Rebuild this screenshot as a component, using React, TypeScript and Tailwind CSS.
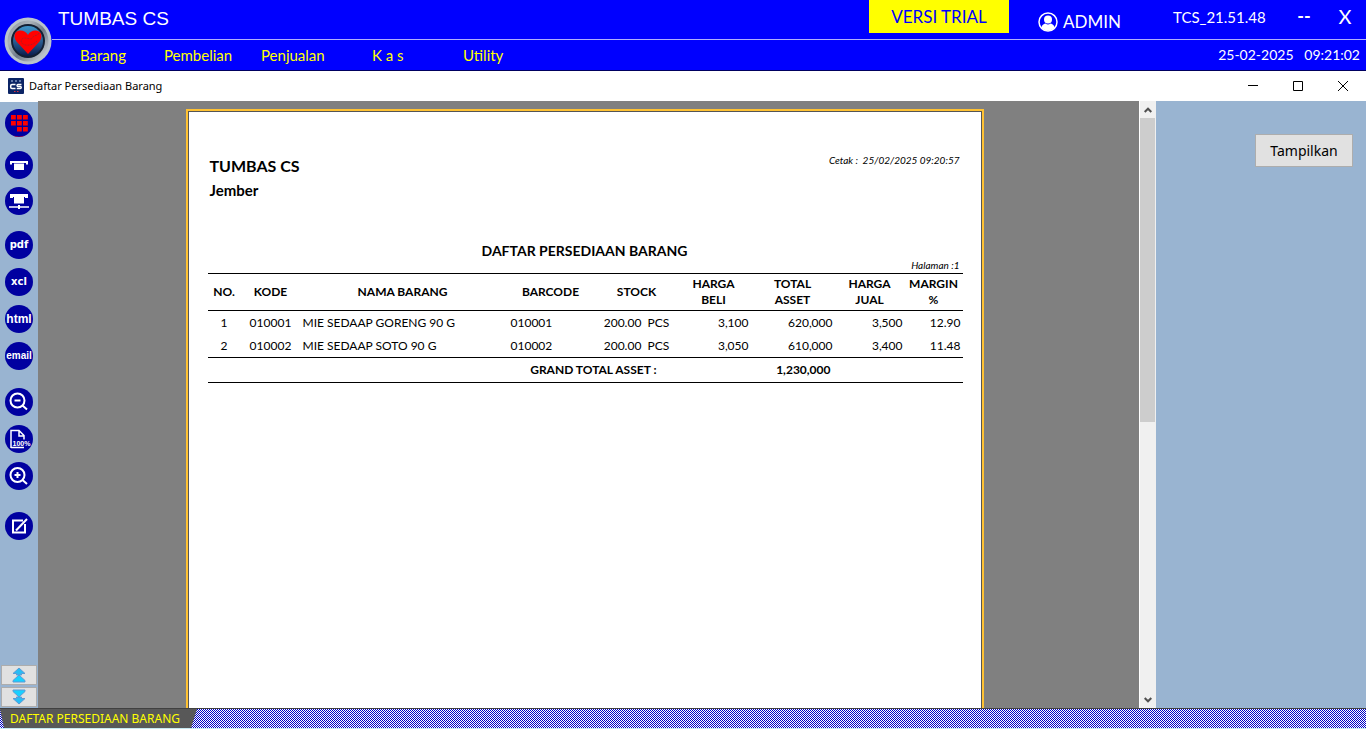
import type { ReactNode } from 'react';

interface StockRow { no: number; kode: string; nama: string; barcode: string; stock: string; beli: string; total: string; jual: string; margin: string; }

const rows: StockRow[] = [
  { no: 1, kode: '010001', nama: 'MIE SEDAAP GORENG 90 G', barcode: '010001', stock: '200.00  PCS', beli: '3,100', total: '620,000', jual: '3,500', margin: '12.90' },
  { no: 2, kode: '010002', nama: 'MIE SEDAAP SOTO 90 G', barcode: '010002', stock: '200.00  PCS', beli: '3,050', total: '610,000', jual: '3,400', margin: '11.48' },
];

const menus = [
  { label: 'Barang', width: 'w-[84px]' },
  { label: 'Pembelian', width: 'w-[97px]' },
  { label: 'Penjualan', width: 'w-[111px]' },
  { label: 'K a s', width: 'w-[91px]' },
  { label: 'Utility', width: 'w-[60px]' },
];

function Logo() {
  return (
    <svg viewBox="0 0 48 48" className="size-12">
      <defs>
        <linearGradient id="ring" x1="0" y1="0" x2="1" y2="1">
          <stop offset="0" stopColor="#8a929c" />
          <stop offset="0.3" stopColor="#aab2ba" />
          <stop offset="0.55" stopColor="#6f7a88" />
          <stop offset="1" stopColor="#dde3e8" />
        </linearGradient>
        <linearGradient id="dial" x1="0" y1="0" x2="0" y2="1">
          <stop offset="0" stopColor="#3f94c8" />
          <stop offset="0.5" stopColor="#2a5f94" />
          <stop offset="1" stopColor="#0c1c4c" />
        </linearGradient>
      </defs>
      <circle cx="24" cy="24" r="23.5" fill="#b9c3cc" />
      <circle cx="24" cy="24" r="20.5" fill="url(#ring)" />
      <circle cx="24" cy="24" r="17" fill="#131f33" />
      <circle cx="24" cy="24" r="15" fill="url(#dial)" />
      <path d="M24 37 L12.5 24.5 C8.5 19 11 13.5 16 13.5 C20 13.5 22.5 15.5 24 18 C25.5 15 28 13.5 31.5 13.5 C37 13.5 39.5 19 35.5 24.5 Z" fill="#ff0000" />
      <path d="M35 16 C33 20 30 17 28.500 21 C27 24 21 19 18 22 C15.500 26 20 29 25 28 C28 28 31 26 33 24" fill="none" stroke="#8f2430" strokeWidth="0.7" strokeDasharray="2 1" />
    </svg>
  );
}

function AppIcon() {
  return (
    <svg viewBox="0 0 16 16" className="size-4">
      <rect width="16" height="16" rx="1" fill="#0b2465" />
      <path d="M3 3h2M7 3h2M11 3h2" stroke="#b9cdf0" strokeWidth="1.2" />
      <path d="M7.500 6.500H4Q2.700 6.500 2.700 7.700V9.300Q2.700 10.500 4 10.500H7.500" fill="none" stroke="#fff" strokeWidth="1.500" />
      <path d="M13.500 6.500H10Q9 6.500 9 7.500T10 8.500H12.300Q13.300 8.500 13.300 9.500T12.300 10.500H8.800" fill="none" stroke="#fff" strokeWidth="1.400" />
      <path d="M6 13.500h1.500M9 13.500h1.500" stroke="#e03040" strokeWidth="1.200" />
    </svg>
  );
}

function Tool({ label, children }: { label: string; children: ReactNode }) {
  return (
    <button aria-label={label} className="flex size-7 shrink-0 items-center justify-center rounded-full bg-[#0000a0] text-white">
      {children}
    </button>
  );
}

function Glyph({ children }: { children: ReactNode }) {
  return <svg viewBox="0 0 28 28" className="size-7" fill="none" stroke="#fff" strokeWidth="2">{children}</svg>;
}

function TextTool({ text, font }: { text: string; font: string }) {
  return (
    <Tool label={text}>
      <span className={`leading-3 font-bold ${font}`}>{text}</span>
    </Tool>
  );
}

function Toolbar() {
  return (
    <aside className="flex w-[38px] shrink-0 flex-col items-center border-t border-white bg-[#99b4d1] pt-[7px] pb-px">
      <Tool label="Menu">
        <Glyph>
          <g fill="#ff0000" stroke="none">
            <path d="M6 6h4.800v4.500H6zM12 6h4.800v4.500H12zM18 6h4.800v4.500H18zM6 12h4.800v4.500H6zM12 12h4.800v4.500H12zM18 12h4.800v4.500H18zM12 18h4.800v4.500H12zM18 18h4.800v4.500H18z" />
            <path d="M8 26.500Q14 28.500 20 26.500L17 27.800H11Z" />
          </g>
        </Glyph>
      </Tool>
      <div className="mt-3.5 flex flex-col gap-2">
        <Tool label="Cetak">
          <Glyph><path d="M5 10h18v3.500h-2V12H7v1.500H5zM9 12.500h10V19H9z" fill="#fff" stroke="none" /></Glyph>
        </Tool>
        <Tool label="Cetak jaringan">
          <Glyph>
            <path d="M5 7h18v4h-3v-1H8v1H5zM9 9h10v7.500H9z" fill="#fff" stroke="none" />
            <path d="M4 20h20" strokeWidth="1.500" />
            <path d="M14 18v4" />
          </Glyph>
        </Tool>
      </div>
      <div className="mt-4 flex flex-col gap-[9px]">
        <TextTool text="pdf" font="font-['DejaVu_Sans',sans-serif] text-[10px]" />
        <TextTool text="xcl" font="font-['DejaVu_Sans',sans-serif] text-[10px]" />
        <TextTool text="html" font="font-['Liberation_Sans',sans-serif] text-[12px]" />
        <TextTool text="email" font="font-['Liberation_Sans',sans-serif] text-[10px]" />
      </div>
      <div className="mt-[18px] flex flex-col gap-[9px]">
        <Tool label="Perkecil">
          <Glyph><circle cx="12.500" cy="12.500" r="7" /><path d="M9.500 12.500h6M17.500 17.500l4.500 4" /></Glyph>
        </Tool>
        <Tool label="Ukuran penuh">
          <Glyph>
            <path d="M6 15V5.500h8l5 5v4M14 6v5h5M6 22.500h13M6 15v8" strokeWidth="1.500" />
            <text x="7.500" y="21" fill="#fff" stroke="none" fontSize="7" fontWeight="bold" fontFamily="Liberation Sans, sans-serif">100%</text>
          </Glyph>
        </Tool>
        <Tool label="Perbesar">
          <Glyph><circle cx="12.500" cy="13" r="7" /><path d="M9.500 13h6M12.500 10v6M17.500 18l4.500 4" /></Glyph>
        </Tool>
      </div>
      <div className="mt-[22px]">
        <Tool label="Ubah">
          <Glyph><path d="M18 8.500H8v12h12V12" /><path d="M11 18.500L22 7" /></Glyph>
        </Tool>
      </div>
      <div className="mt-auto flex flex-col gap-0.5">
        <PageButton label="Halaman pertama" />
        <PageButton label="Halaman terakhir" down />
      </div>
    </aside>
  );
}

function PageButton({ label, down }: { label: string; down?: boolean }) {
  return (
    <button aria-label={label} className="flex h-5 w-9 items-center justify-center border border-[#adadad] bg-[#e1e1e1]">
      <svg viewBox="0 0 16 16" className={down ? 'size-4 rotate-180' : 'size-4'} strokeWidth="1">
        <path d="M8 1L14 6.500H10.500V8H5.500V6.500H2Z" fill="#28bdf5" stroke="#5c9bd5" />
        <path d="M8 8L14 13.500V15H2V13.500Z" fill="#18d0ff" stroke="#5c9bd5" />
      </svg>
    </button>
  );
}

function Report() {
  return (
    <article className="min-h-full w-[798px] border-2 border-b-0 border-[#ffc233] bg-white">
      <div className="min-h-full border border-b-0 border-[#555] px-[19px] pt-10 text-black">
        <div className="flex justify-between px-0.5">
          <div className="font-bold">
            <h2 className="pt-0.5 text-[16px] leading-6">TUMBAS CS</h2>
            <p className="text-[15px] leading-6">Jember</p>
          </div>
          <p className="text-[10px] leading-4 italic whitespace-pre">Cetak :  25/02/2025 09:20:57</p>
        </div>
        <h3 className="mt-[39px] text-center text-[14px] leading-5 font-bold">DAFTAR PERSEDIAAN BARANG</h3>
        <p className="h-3 px-0.5 text-right text-[10px] leading-2 italic">Halaman :1</p>
        <table className="w-full table-fixed border-separate border-spacing-0 text-[12px] leading-4">
          <colgroup>
            <col className="w-[33px]" />
            <col className="w-[60px]" />
            <col className="w-[204px]" />
            <col className="w-[92px]" />
            <col className="w-[80px]" />
            <col className="w-[74px]" />
            <col className="w-[84px]" />
            <col className="w-[70px]" />
            <col className="w-[58px]" />
          </colgroup>
          <thead>
            <tr className="h-[38px] *:border-y *:border-black *:p-0 *:font-bold">
              <th>NO.</th>
              <th>KODE</th>
              <th>NAMA BARANG</th>
              <th>BARCODE</th>
              <th>STOCK</th>
              <th>HARGA<br />BELI</th>
              <th>TOTAL<br />ASSET</th>
              <th>HARGA<br />JUAL</th>
              <th>MARGIN<br />%</th>
            </tr>
          </thead>
          <tbody>
            {rows.map((r) => (
              <tr key={r.no} className="h-[23px] *:border-black last:h-6 last:*:border-b">
                <td className="text-center">{r.no}</td>
                <td className="text-center">{r.kode}</td>
                <td className="pl-0.5">{r.nama}</td>
                <td className="pl-1.5">{r.barcode}</td>
                <td className="text-center whitespace-pre">{r.stock}</td>
                <td className="pr-0.5 text-right">{r.beli}</td>
                <td className="pr-0.5 text-right">{r.total}</td>
                <td className="pr-0.5 text-right">{r.jual}</td>
                <td className="pr-0.5 text-right">{r.margin}</td>
              </tr>
            ))}
          </tbody>
          <tfoot>
            <tr className="h-[25px] *:border-b *:border-black">
              <th colSpan={5} className="pr-5 text-right font-bold">GRAND TOTAL ASSET :</th>
              <td colSpan={2} className="pr-1 text-right font-bold">1,230,000</td>
              <td colSpan={2}></td>
            </tr>
          </tfoot>
        </table>
      </div>
    </article>
  );
}

function ScrollBar() {
  return (
    <div className="flex w-[17px] shrink-0 flex-col border-l border-white bg-[#f0f0f0]">
      <button aria-label="Gulir ke atas" className="flex h-[17px] items-center justify-center">
        <svg viewBox="0 0 8 6" className="h-1.5 w-2" fill="none" stroke="#505050" strokeWidth="2"><path d="M0.700 5L4 1.700L7.300 5" /></svg>
      </button>
      <div className="flex-1 pr-px">
        <div className="h-[53%] bg-[#cdcdcd]"></div>
      </div>
      <button aria-label="Gulir ke bawah" className="flex h-[17px] items-center justify-center">
        <svg viewBox="0 0 8 6" className="h-1.5 w-2" fill="none" stroke="#505050" strokeWidth="2"><path d="M0.700 1L4 4.300L7.300 1" /></svg>
      </button>
    </div>
  );
}

export default function App() {
  return (
    <div className="flex h-screen flex-col overflow-hidden bg-white font-['Lato',sans-serif]">
      <header className="flex h-[71px] shrink-0 items-stretch border-b border-[#000060] bg-[#0000ff] text-white">
        <div className="flex w-[52px] shrink-0 items-end justify-end pb-[5px]"><Logo /></div>
        <div className="flex flex-1 flex-col">
          <div className="flex h-10 items-start border-b border-[#b0b0ff]">
            <h1 className="flex-1 pt-[7px] pl-1.5 font-['Liberation_Sans',sans-serif] text-[19px] leading-6">TUMBAS CS</h1>
            <div className="flex h-[33px] w-[140px] items-center justify-center bg-[#ffff00] text-[17px] text-[#0000ff]">VERSI TRIAL</div>
            <div className="ml-7 flex w-[136px] items-center gap-[5px] pt-2.5 pl-px text-[17px] leading-6">
              <svg viewBox="0 0 20 20" className="size-5">
                <circle cx="10" cy="10" r="9" fill="none" stroke="#fff" strokeWidth="1.500" />
                <circle cx="10" cy="7.500" r="4" fill="#fff" />
                <path d="M3.500 15.500C4 12.500 6.500 11.500 7.500 11.500Q10 13.500 12.500 11.500C13.500 11.500 16 12.500 16.500 15.500Q14 18.500 10 18.500T3.500 15.500Z" fill="#fff" />
              </svg>
              ADMIN
            </div>
            <p className="w-[120px] pt-[5px] text-[15px] leading-6">TCS_21.51.48</p>
            <button aria-label="Minimize" className="w-[22px] pt-1 text-[18px] leading-6 font-bold">--</button>
            <button aria-label="Tutup" className="mr-[11px] ml-5 w-5 pt-1 text-[20px] leading-6">X</button>
          </div>
          <nav className="flex flex-1 items-center pr-1.5 pl-7 text-[15px]">
            {menus.map((m) => (
              <button key={m.label} className={`text-left text-[#ffff00] ${m.width}`}>{m.label}</button>
            ))}
            <time className="ml-auto pb-0.5 text-[14px] whitespace-pre">25-02-2025   09:21:02</time>
          </nav>
        </div>
      </header>

      <div className="flex h-[30px] shrink-0 items-center bg-white pl-2 text-black">
        <AppIcon />
        <span className="ml-[5px] flex-1 font-['Noto_Sans',sans-serif] text-[11px]">Daftar Persediaan Barang</span>
        <button aria-label="Kecilkan jendela" className="flex w-[45px] justify-center"><svg viewBox="0 0 10 10" className="size-2.5" stroke="#000" fill="none"><path d="M0 4.500h10" /></svg></button>
        <button aria-label="Besarkan jendela" className="flex w-[45px] justify-center"><svg viewBox="0 0 10 10" className="size-2.5" stroke="#000" fill="none"><path d="M0.500 0.500h9v9h-9z" /></svg></button>
        <button aria-label="Tutup jendela" className="flex w-[46px] justify-center"><svg viewBox="0 0 10 10" className="size-2.5" stroke="#000" fill="none"><path d="M0 0L10 10M10 0L0 10" /></svg></button>
      </div>

      <main className="flex min-h-0 flex-1">
        <Toolbar />
        <section className="flex flex-1 justify-center overflow-hidden bg-[#808080] pt-2 pr-2">
          <Report />
        </section>
        <ScrollBar />
        <aside className="flex w-[210px] shrink-0 items-start justify-end bg-[#99b4d1] pt-[33px] pr-[13px]">
          <button className="h-[33px] w-[98px] border border-[#adadad] bg-[#e1e1e1] font-['Noto_Sans',sans-serif] text-[14px] text-black">Tampilkan</button>
        </aside>
      </main>

      <footer className="flex h-[21px] shrink-0 border-t border-b border-t-[#404040] border-b-[#c5e8f0] bg-[repeating-conic-gradient(#0000c8_0_25%,#fff_0_50%)] bg-[length:2px_2px]">
        <button className="w-[197px] bg-[#585858] pl-2.5 text-left font-['Noto_Sans',sans-serif] text-[12px] leading-[19px] text-[#ffff00] [clip-path:polygon(0_0,100%_0,97%_100%,2%_100%)]">
          DAFTAR PERSEDIAAN BARANG
        </button>
      </footer>
    </div>
  );
}
